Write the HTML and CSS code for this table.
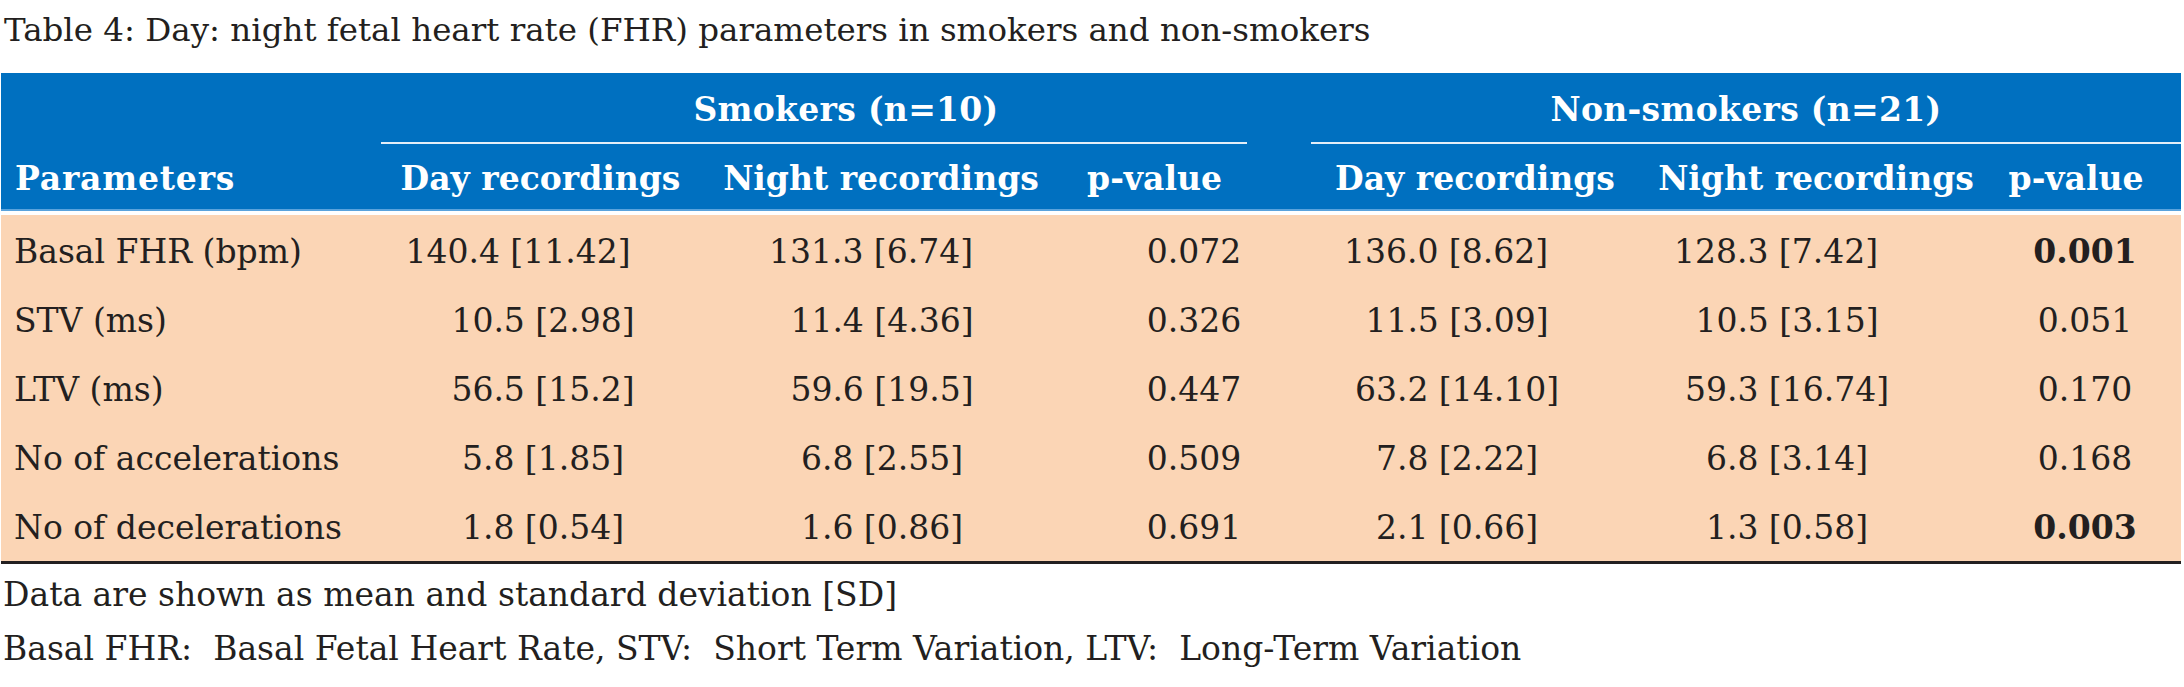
FILE: index.html
```html
<!DOCTYPE html>
<html lang="en">
<head>
<meta charset="utf-8">
<title>Table 4</title>
<link rel="stylesheet" href="styles.css">
</head>
<body>
<div class="page">
  <p class="caption">Table 4: Day: night fetal heart rate (FHR) parameters in smokers and non-smokers</p>
  <div class="table">
    <div class="thead">
      <div class="group-row">
        <div class="group-spacer"></div>
        <div class="group group-smokers">
          <div class="group-title">Smokers (n=10)</div>
          <div class="group-rule"></div>
        </div>
        <div class="group group-non">
          <div class="group-title">Non-smokers (n=21)</div>
          <div class="group-rule"></div>
        </div>
      </div>
      <div class="head-row">
        <div class="hcell hcell-label">Parameters</div>
        <div class="hcell">Day recordings</div>
        <div class="hcell">Night recordings</div>
        <div class="hcell">p-value</div>
        <div class="hcell"></div>
        <div class="hcell">Day recordings</div>
        <div class="hcell">Night recordings</div>
        <div class="hcell">p-value</div>
        <div class="hcell"></div>
      </div>
    </div>
    <div class="tbody">
      <div class="row row-first">
        <div class="cell cell-label">Basal FHR (bpm)</div>
        <div class="cell cell-shift cell-shift-wide">140.4 [11.42]</div>
        <div class="cell cell-shift">131.3 [6.74]</div>
        <div class="cell">0.072</div>
        <div class="cell cell-shift">136.0 [8.62]</div>
        <div class="cell cell-shift">128.3 [7.42]</div>
        <div class="cell cell-sig">0.001</div>
      </div>
      <div class="row">
        <div class="cell cell-label">STV (ms)</div>
        <div class="cell">10.5 [2.98]</div>
        <div class="cell">11.4 [4.36]</div>
        <div class="cell">0.326</div>
        <div class="cell">11.5 [3.09]</div>
        <div class="cell">10.5 [3.15]</div>
        <div class="cell">0.051</div>
      </div>
      <div class="row">
        <div class="cell cell-label">LTV (ms)</div>
        <div class="cell">56.5 [15.2]</div>
        <div class="cell">59.6 [19.5]</div>
        <div class="cell">0.447</div>
        <div class="cell">63.2 [14.10]</div>
        <div class="cell">59.3 [16.74]</div>
        <div class="cell">0.170</div>
      </div>
      <div class="row">
        <div class="cell cell-label">No of accelerations</div>
        <div class="cell">5.8 [1.85]</div>
        <div class="cell">6.8 [2.55]</div>
        <div class="cell">0.509</div>
        <div class="cell">7.8 [2.22]</div>
        <div class="cell">6.8 [3.14]</div>
        <div class="cell">0.168</div>
      </div>
      <div class="row">
        <div class="cell cell-label">No of decelerations</div>
        <div class="cell">1.8 [0.54]</div>
        <div class="cell">1.6 [0.86]</div>
        <div class="cell">0.691</div>
        <div class="cell">2.1 [0.66]</div>
        <div class="cell">1.3 [0.58]</div>
        <div class="cell cell-sig">0.003</div>
      </div>
    </div>
  </div>
  <div class="notes">
    <p class="note">Data are shown as mean and standard deviation [SD]</p>
    <p class="note">Basal FHR:&nbsp; Basal Fetal Heart Rate, STV:&nbsp; Short Term Variation, LTV:&nbsp; Long-Term Variation</p>
  </div>
</div>
</body>
</html>
```
FILE: styles.css
```css
html, body {
  margin: 0;
  padding: 0;
  background: #ffffff;
}

.page {
  width: 2184px;
  font-family: "DejaVu Serif", "Liberation Serif", serif;
  font-size: 33px;
  color: #231f20;
}

.caption {
  margin: 0;
  padding-left: 4px;
  height: 73px;
  line-height: 60px;
  font-size: 32.5px;
  box-sizing: border-box;
}

.table {
  width: 2180px;
  margin-left: 1px;
}

.thead {
  background: #0070c0;
  color: #ffffff;
  font-weight: bold;
  border-bottom: 2px solid #5aa3dc;
  margin-bottom: 4px;
}

.group-row {
  display: flex;
  height: 71px;
}

.group-spacer {
  width: 380px;
  flex: none;
}

.group {
  display: flex;
  flex-direction: column;
}

.group-smokers {
  width: 930px;
  flex: none;
}

.group-non {
  flex: 1;
}

.group-title {
  flex: 1;
  display: flex;
  align-items: center;
  justify-content: center;
  padding-top: 4px;
  letter-spacing: 0.3px;
}

.group-rule {
  height: 2px;
  background: #e3eef8;
}

.group-smokers .group-rule {
  margin-right: 64px;
}

.head-row {
  display: grid;
  grid-template-columns: 380px 319px 362px 185px 64px 328px 354px 166px 22px;
  height: 65px;
  padding-top: 3px;
  box-sizing: border-box;
  align-items: center;
}

.hcell {
  text-align: center;
  white-space: nowrap;
}

.hcell-label {
  text-align: left;
  padding-left: 14px;
  letter-spacing: 0.8px;
}

.tbody {
  background: #fbd5b5;
  border-bottom: 3px solid #231f20;
}

.row {
  display: grid;
  grid-template-columns: 380px 324px 354px 270px 256px 404px 192px;
  height: 69.2px;
  padding-top: 3px;
  box-sizing: border-box;
  align-items: center;
}

.cell {
  text-align: center;
  white-space: nowrap;
}

.cell-shift {
  padding-right: 22px;
}

.cell-shift-wide {
  padding-right: 50px;
}

.cell-label {
  text-align: left;
  padding-left: 13px;
}

.cell-sig {
  font-weight: bold;
}

.notes {
  padding-top: 4px;
  padding-left: 3px;
}

.note {
  margin: 0;
  line-height: 54px;
}
```
